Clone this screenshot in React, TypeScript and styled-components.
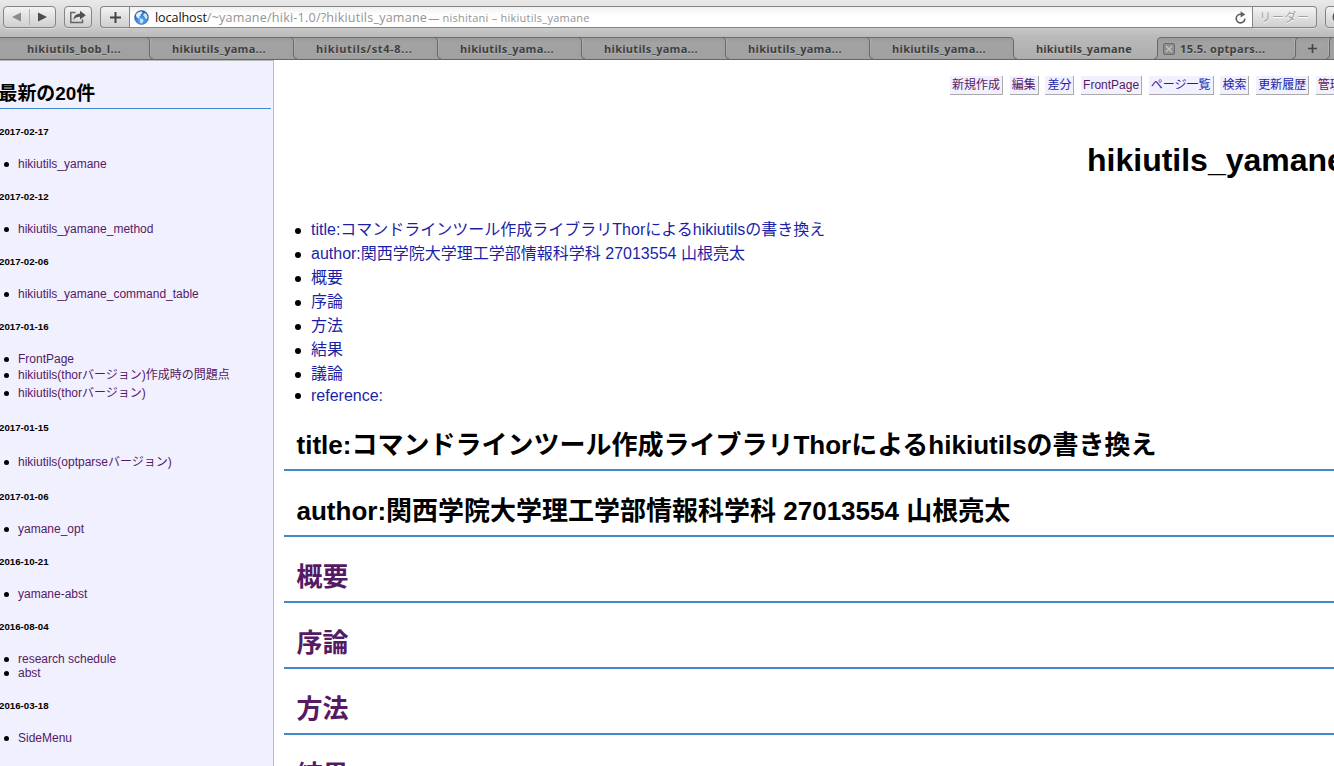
import React from "react";
import styled, { createGlobalStyle } from "styled-components";

const GlobalStyle = createGlobalStyle`
  * { box-sizing: border-box; }
  html, body { margin: 0; padding: 0; overflow: hidden; background: #fff; }
  h1, h2, h3, h4, ul, li { margin: 0; padding: 0; font-weight: normal; list-style: none; }
  a { text-decoration: none; color: inherit; }
`;

const BLUE = "#1b1fa8";
const VISITED = "#551a63";

const Window = styled.div`
  width: 1334px;
  height: 766px;
  overflow: hidden;
  display: flex;
  flex-direction: column;
  font-family: "Liberation Sans", "Noto Sans CJK JP", sans-serif;
  color: #000;
`;

/* ---------- browser chrome ---------- */

const Chrome = styled.header`
  height: 60px;
  flex: none;
  background: linear-gradient(#e9e9e9 0, #d3d3d3 22px, #b9b9b9 37px, #adadad 60px);
  font-family: "Open Sans", "Noto Sans CJK JP", sans-serif;
  white-space: nowrap;
`;

const Toolbar = styled.div`
  height: 37px;
  padding: 6px 0 9px 3px;
  display: flex;
  align-items: stretch;
`;

const ToolButton = styled.div<{ $w: number; $gap?: number; $join?: "left" | "right" }>`
  width: ${(p) => p.$w}px;
  margin-right: ${(p) => p.$gap ?? 0}px;
  flex: none;
  display: flex;
  align-items: center;
  justify-content: center;
  border: 1px solid #858585;
  border-radius: ${(p) => (p.$join === "left" ? "4px 0 0 4px" : p.$join === "right" ? "0 4px 4px 0" : "4px")};
  ${(p) => (p.$join === "left" ? "border-right: none;" : p.$join === "right" ? "border-left: none;" : "")}
  background: linear-gradient(#f3f3f3, #cfcfcf);
  box-shadow: 0 1px 0 rgba(255, 255, 255, 0.35);
`;

const HalfButton = styled.div<{ $divided?: boolean }>`
  flex: 1;
  height: 16px;
  display: flex;
  align-items: center;
  justify-content: center;
  border-right: ${(p) => (p.$divided ? "1px solid #b2b2b2" : "none")};
`;

const AddressField = styled.div`
  width: 1124px;
  flex: none;
  display: flex;
  align-items: center;
  padding: 0 6px 0 4px;
  border: 1px solid #858585;
  background: linear-gradient(#f1f1f1, #fff 8px);
`;

const UrlHost = styled.span`
  margin-left: 6px;
  padding-top: 1px;
  font-size: 12.6px;
  line-height: 19px;
  color: #111;
  letter-spacing: -0.1px;
`;

const UrlPath = styled.span`
  padding-top: 1px;
  font-size: 12.6px;
  line-height: 19px;
  color: #949494;
  letter-spacing: 0.2px;
`;

const PageLabel = styled.span`
  margin-left: 1px;
  flex: 1;
  font-size: 11px;
  line-height: 20px;
  padding-top: 1px;
  color: #949494;
  letter-spacing: 0.25px;
`;

const ReaderLabel = styled.span`
  font-size: 12px;
  color: #a0a0a0;
  letter-spacing: 0.6px;
  text-shadow: 0 1px 0 #fff;
`;

const TabBar = styled.div`
  height: 23px;
  display: flex;
  border-bottom: 1px solid #666;
`;

const Tab = styled.div<{ $w: number; $active?: boolean; $pad?: number }>`
  width: ${(p) => p.$w}px;
  flex: none;
  display: flex;
  align-items: center;
  padding-left: ${(p) => p.$pad ?? 19}px;
  border-top: 1px solid ${(p) => (p.$active ? "transparent" : "#6e6e6e")};
  background: ${(p) => (p.$active ? "none" : "linear-gradient(#999, #a3a3a3 5px, #a0a0a0)")};
  font-size: 11px;
  font-weight: 700;
  line-height: 20px;
  color: #3f3f3f;
  text-shadow: 0 1px 0 rgba(255, 255, 255, 0.25);
`;

const TabText = styled.span<{ $spacing: number }>`
  letter-spacing: ${(p) => p.$spacing}px;
`;

const EdgeSvg = styled.svg<{ $mirrored?: boolean }>`
  flex: none;
  display: block;
  transform: ${(p) => (p.$mirrored ? "scaleX(-1)" : "none")};
`;

const CloseBox = styled.span`
  width: 12px;
  height: 12px;
  margin: 0 5px 0 2px;
  display: flex;
  align-items: center;
  justify-content: center;
  border-radius: 2px;
  border: 1px solid #6b6b6b;
  background: #8e8e8e;
`;

/* ---------- page ---------- */

const Page = styled.div`
  flex: 1;
  min-height: 0;
  display: flex;
`;

const Sidebar = styled.aside`
  width: 274px;
  flex: none;
  overflow: hidden;
  background: #f0f0ff;
  border-top: 1px solid #bbb;
  border-right: 1px solid #bbb;
`;

const SideTitle = styled.h3`
  width: 271px;
  height: 48px;
  padding-top: 19px;
  margin-bottom: 17px;
  border-bottom: 1px solid #4488cc;
  font-size: 18.9px;
  font-weight: 700;
  line-height: 28px;
  text-indent: -1.5px;
  white-space: nowrap;
`;

const DateHeading = styled.h4`
  height: 12px;
  margin-bottom: 19px;
  font-size: 9.7px;
  font-weight: 700;
  line-height: 12px;
  text-indent: -1px;
`;

const SideList = styled.ul`
  margin-bottom: 20px;
`;

const SideItem = styled.li<{ $tall?: boolean }>`
  height: ${(p) => (p.$tall ? 18 : 14)}px;
  line-height: ${(p) => (p.$tall ? 18 : 14)}px;
  display: flex;
  align-items: center;
  font-size: 12px;
  color: ${VISITED};
  white-space: nowrap;

  &::before {
    content: "";
    width: 5px;
    height: 5px;
    margin: 1px 9.5px 0 3.5px;
    border-radius: 50%;
    background: #000;
  }
`;

const Main = styled.main`
  flex: 1;
  min-width: 0;
  overflow: hidden;
  padding: 16px 0 0 10px;
`;

const Menu = styled.nav`
  display: flex;
  gap: 6.7px;
  padding-left: 666px;
`;

const MenuItem = styled.a<{ $w: number; $visited?: boolean }>`
  width: ${(p) => p.$w}px;
  height: 19px;
  flex: none;
  padding-left: 2px;
  border-right: 1px solid #aaa;
  border-bottom: 1px solid #aaa;
  background: #f0f0ff;
  font-size: 12px;
  line-height: 18px;
  white-space: nowrap;
  color: ${(p) => (p.$visited ? VISITED : BLUE)};
`;

const PageTitle = styled.h1`
  height: 40px;
  margin: 45px 0 38px;
  padding-left: 803px;
  font-size: 32px;
  font-weight: 700;
  line-height: 40px;
`;

const Toc = styled.ul`
  margin-bottom: 18px;
`;

const TocItem = styled.li<{ $short?: boolean }>`
  height: ${(p) => (p.$short ? 19 : 24)}px;
  line-height: ${(p) => (p.$short ? 19 : 24)}px;
  display: flex;
  align-items: center;
  font-size: 16px;
  color: ${BLUE};
  white-space: nowrap;

  &::before {
    content: "";
    width: 6px;
    height: 6px;
    margin: 1px 10.5px 0 10.5px;
    border-radius: 50%;
    background: #000;
  }
`;

const SectionHeading = styled.h2<{ $visited?: boolean }>`
  height: 48px;
  margin-bottom: 18px;
  padding-left: 12.5px;
  border-bottom: 2px solid #4488cc;
  font-size: 26px;
  font-weight: 700;
  line-height: 44px;
  white-space: nowrap;
  color: ${(p) => (p.$visited ? VISITED : "#000")};
`;

/* Curved seam between two tabs; `open` leaves the far side unshaded for the active tab. */
const TabEdge = ({ open, mirrored }: { open?: boolean; mirrored?: boolean }) => (
  <EdgeSvg $mirrored={mirrored} width="7" height="22" viewBox="0 0 7 22" fill="none">
    {open ? (
      <path d="M0 .5Q3.500 .5 3.500 4V18Q3.500 21.500 7 22H0z" fill="#a0a0a0" />
    ) : (
      <path d="M0 0h7v22H0z" fill="#a0a0a0" />
    )}
    {!open && <path d="M0 .5h7" stroke="#6e6e6e" />}
    <path d="M0 .5Q3.500 .5 3.500 4V18Q3.500 21.500 7 22" stroke="#686868" />
    {!open && <path d="M4.500 3V18" stroke="#b4b4b4" strokeOpacity="0.700" />}
  </EdgeSvg>
);

const ShareIcon = () => (
  <svg width="18" height="14" viewBox="0 0 18 14" fill="none">
    <path d="M6.500 2.500H1.800V12.500H13.500V9.500" stroke="#666" strokeWidth="1.500" />
    <path d="M4.500 10C4.700 6 7 3.800 11 3.800V.8l5.800 4.500L11 9.600V6.700C8.300 6.600 6 7.500 4.500 10z" fill="#505050" />
  </svg>
);

const PlusIcon = ({ size }: { size: number }) => (
  <svg width={size} height={size} viewBox="0 0 10 10">
    <path d="M5 0v10M0 5h10" stroke="#444" strokeWidth="1.800" />
  </svg>
);

const GlobeIcon = () => (
  <svg width="15" height="15" viewBox="0 0 15 15">
    <defs>
      <radialGradient id="sea" cx="50%" cy="75%" r="80%">
        <stop offset="0" stopColor="#6fb8f5" />
        <stop offset="0.6" stopColor="#2f78d4" />
        <stop offset="1" stopColor="#1a469a" />
      </radialGradient>
    </defs>
    <circle cx="7.500" cy="7.500" r="6.900" fill="url(#sea)" stroke="#2a5596" strokeWidth="0.600" />
    <path d="M1.800 5C3 2.500 5.500 1.200 8 1.500L8.500 3 6.800 4.200 6.400 6 4.800 6.700 6 8 4.500 8.500 2.500 7z" fill="#e2f1fd" />
    <path d="M5.500 8.200l3.300 1 .4 1.800L7.800 13.300l-1.200.1-.4-2.600z" fill="#cfe8fb" />
    <path d="M9.800 3.300l2.300.3 1.400 2.800-.4 2.800-1.800-.6-.9-2-1.200-1z" fill="#cfe8fb" />
  </svg>
);

const ReloadIcon = () => (
  <svg width="11" height="13" viewBox="0 0 11 13" fill="none">
    <path d="M9.800 7.500A4.300 4.300 0 1 1 6 3.300" stroke="#606060" strokeWidth="1.600" />
    <path d="M5.600 .2L10.300 3.400 5.600 6.600z" fill="#606060" />
  </svg>
);

const Triangle = ({ back }: { back?: boolean }) => (
  <svg width="9" height="10" viewBox="0 0 9 10">
    <path d={back ? "M9 .5v9L0 5z" : "M0 .5v9L9 5z"} fill={back ? "#8c8c8c" : "#4c4c4c"} />
  </svg>
);

const tabs = [
  { text: "hikiutils_bob_l...", w: 146, pad: 27, spacing: 0.36 },
  { text: "hikiutils_yama...", w: 137, spacing: 0.27 },
  { text: "hikiutils/st4-8...", w: 137, spacing: 0.62 },
  { text: "hikiutils_yama...", w: 137, spacing: 0.27 },
  { text: "hikiutils_yama...", w: 137, spacing: 0.27 },
  { text: "hikiutils_yama...", w: 137, spacing: 0.27 },
  { text: "hikiutils_yama...", w: 137, spacing: 0.27 },
];

type Entry = { text: string; tall?: boolean };
const history: { date: string; items: Entry[] }[] = [
  { date: "2017-02-17", items: [{ text: "hikiutils_yamane" }] },
  { date: "2017-02-12", items: [{ text: "hikiutils_yamane_method" }] },
  { date: "2017-02-06", items: [{ text: "hikiutils_yamane_command_table" }] },
  {
    date: "2017-01-16",
    items: [
      { text: "FrontPage" },
      { text: "hikiutils(thorバージョン)作成時の問題点", tall: true },
      { text: "hikiutils(thorバージョン)", tall: true },
    ],
  },
  { date: "2017-01-15", items: [{ text: "hikiutils(optparseバージョン)", tall: true }] },
  { date: "2017-01-06", items: [{ text: "yamane_opt" }] },
  { date: "2016-10-21", items: [{ text: "yamane-abst" }] },
  { date: "2016-08-04", items: [{ text: "research schedule" }, { text: "abst" }] },
  { date: "2016-03-18", items: [{ text: "SideMenu" }] },
];

const menu = [
  { text: "新規作成", w: 53, visited: true },
  { text: "編集", w: 29, visited: true },
  { text: "差分", w: 29 },
  { text: "FrontPage", w: 61, visited: true },
  { text: "ページ一覧", w: 65 },
  { text: "検索", w: 29 },
  { text: "更新履歴", w: 53 },
  { text: "管理", w: 29, visited: true },
];

const title = "title:コマンドラインツール作成ライブラリThorによるhikiutilsの書き換え";
const author = "author:関西学院大学理工学部情報科学科 27013554 山根亮太";
const sections = ["概要", "序論", "方法", "結果"];

export default function App() {
  return (
    <Window>
      <GlobalStyle />
      <Chrome>
        <Toolbar>
          <ToolButton $w={53} $gap={8}>
            <HalfButton $divided>
              <Triangle back />
            </HalfButton>
            <HalfButton>
              <Triangle />
            </HalfButton>
          </ToolButton>
          <ToolButton $w={28} $gap={8}>
            <ShareIcon />
          </ToolButton>
          <ToolButton $w={29} $join="left">
            <PlusIcon size={11} />
          </ToolButton>
          <AddressField>
            <GlobeIcon />
            <UrlHost>localhost</UrlHost>
            <UrlPath>/~yamane/hiki-1.0/?hikiutils_yamane</UrlPath>
            <PageLabel>— nishitani – hikiutils_yamane</PageLabel>
            <ReloadIcon />
          </AddressField>
          <ToolButton $w={64} $gap={8} $join="right">
            <ReaderLabel>リーダー</ReaderLabel>
          </ToolButton>
          <ToolButton $w={28}>
            <svg width="14" height="14" viewBox="0 0 14 14">
              <circle cx="7" cy="7" r="6.500" fill="#555" />
            </svg>
          </ToolButton>
        </Toolbar>
        <TabBar>
          {tabs.map((t, i) => (
            <React.Fragment key={i}>
              <Tab $w={t.w} $pad={t.pad}>
                <TabText $spacing={t.spacing}>{t.text}</TabText>
              </Tab>
              <TabEdge open={i === tabs.length - 1} />
            </React.Fragment>
          ))}
          <Tab $w={137} $active>
            <TabText $spacing={0.14}>hikiutils_yamane</TabText>
          </Tab>
          <TabEdge open mirrored />
          <Tab $w={131} $pad={0}>
            <CloseBox>
              <svg width="8" height="8" viewBox="0 0 8 8">
                <path d="M1 1l6 6M7 1L1 7" stroke="#c4c4c4" strokeWidth="1.400" />
              </svg>
            </CloseBox>
            <TabText $spacing={0.34}>15.5. optpars...</TabText>
          </Tab>
          <TabEdge mirrored />
          <Tab $w={27} $pad={8.5}>
            <PlusIcon size={9} />
          </Tab>
          <TabEdge mirrored />
          <Tab $w={10} $pad={0} />
        </TabBar>
      </Chrome>
      <Page>
        <Sidebar>
          <SideTitle>最新の20件</SideTitle>
          {history.map((h) => (
            <React.Fragment key={h.date}>
              <DateHeading>{h.date}</DateHeading>
              <SideList>
                {h.items.map((it) => (
                  <SideItem key={it.text} $tall={it.tall}>
                    <a>{it.text}</a>
                  </SideItem>
                ))}
              </SideList>
            </React.Fragment>
          ))}
        </Sidebar>
        <Main>
          <Menu>
            {menu.map((m) => (
              <MenuItem key={m.text} $w={m.w} $visited={m.visited}>
                {m.text}
              </MenuItem>
            ))}
          </Menu>
          <PageTitle>hikiutils_yamane</PageTitle>
          <Toc>
            {[title, author, "概要", "序論", "方法", "結果", "議論"].map((t) => (
              <TocItem key={t}>
                <a>{t}</a>
              </TocItem>
            ))}
            <TocItem $short>
              <a>reference:</a>
            </TocItem>
          </Toc>
          <SectionHeading>{title}</SectionHeading>
          <SectionHeading>{author}</SectionHeading>
          {sections.map((s) => (
            <SectionHeading key={s} $visited>
              {s}
            </SectionHeading>
          ))}
        </Main>
      </Page>
    </Window>
  );
}
